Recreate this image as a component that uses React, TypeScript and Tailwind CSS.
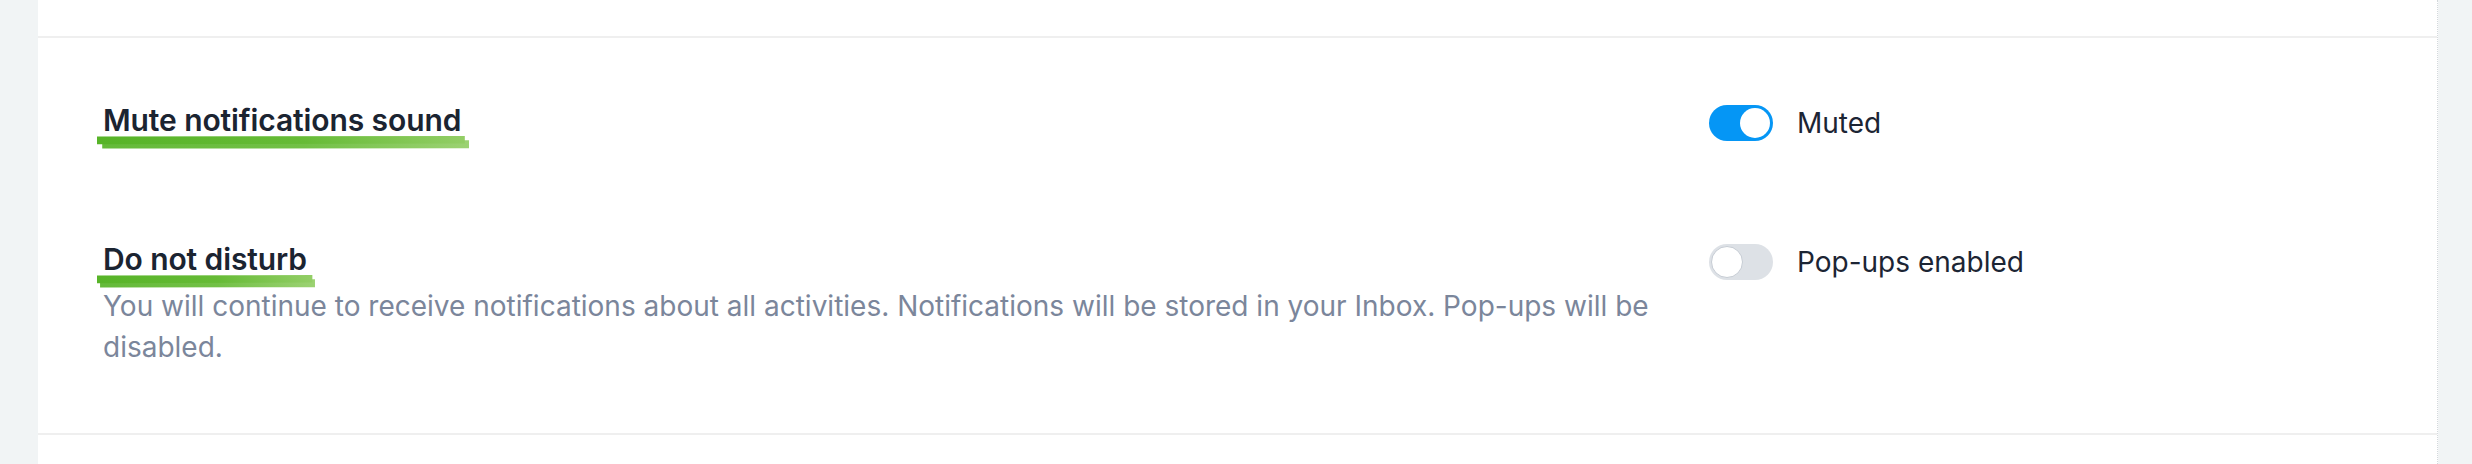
import React from "react";

function Highlight() {
  const id = React.useId().replace(/:/g, "");
  return (
    <svg
      className="absolute left-[-6px] top-[36px] h-[13px] w-[calc(100%+14px)]"
      viewBox="0 0 100 13"
      preserveAspectRatio="none"
      aria-hidden="true"
    >
      <defs>
        <linearGradient id={id} x1="0" y1="0" x2="1" y2="0">
          <stop offset="0" stopColor="#57b428" />
          <stop offset="0.55" stopColor="#66bb36" />
          <stop offset="1" stopColor="#93ce66" />
        </linearGradient>
      </defs>
      <polygon points="0,0.6 98.8,0 98.8,7.6 0,8.2" fill={`url(#${id})`} />
      <polygon points="1.4,5 100,4.3 100,12.2 1.4,12.6" fill={`url(#${id})`} opacity="0.92" />
    </svg>
  );
}

function Title({ children }: { children: React.ReactNode }) {
  return (
    <div className="h-[40px]">
      <span className="relative inline-block text-[30px] leading-[40px] font-semibold text-[#1b2431] tracking-[-0.1px]">
        <Highlight />
        <span className="relative">{children}</span>
      </span>
    </div>
  );
}

function Toggle({ on }: { on: boolean }) {
  if (on) {
    return (
      <div className="flex h-[36px] w-[64px] shrink-0 items-center justify-end rounded-full bg-[#0596f5] p-[3px]">
        <div className="h-[30px] w-[30px] rounded-full bg-white" />
      </div>
    );
  }
  return (
    <div className="flex h-[36px] w-[64px] shrink-0 items-center justify-start rounded-full bg-[#dde1e6] p-[2px]">
      <div className="h-[32px] w-[32px] rounded-full border-[1.5px] border-[#c6ccd4] bg-white" />
    </div>
  );
}

function Row({
  title,
  desc,
  on,
  label,
}: {
  title: string;
  desc?: string;
  on: boolean;
  label: string;
}) {
  return (
    <div className="flex">
      <div className="w-[1606px] shrink-0 pr-[30px]">
        <Title>{title}</Title>
        {desc && (
          <p className="mt-[7px] text-[28px] leading-[41px] text-[#7b869b]">{desc}</p>
        )}
      </div>
      <div className="flex items-start gap-[24px] pt-[5px]">
        <Toggle on={on} />
        <span className="text-[28px] leading-[36px] text-[#1c2534]">{label}</span>
      </div>
    </div>
  );
}

export default function App() {
  return (
    <div className="flex min-h-[464px] bg-[#f1f4f5] font-['Inter',sans-serif]">
      <div className="ml-[38px] w-[2400px] border-r border-dotted border-[#d3d7db] bg-white">
        <div className="h-[36px]" />
        <div className="flex flex-col gap-[98px] border-y-2 border-[#efefef] pl-[65px] pr-[70px] pt-[62px] pb-[65px]">
          <Row title="Mute notifications sound" on={true} label="Muted" />
          <Row
            title="Do not disturb"
            desc="You will continue to receive notifications about all activities. Notifications will be stored in your Inbox. Pop-ups will be disabled."
            on={false}
            label="Pop-ups enabled"
          />
        </div>
      </div>
    </div>
  );
}
